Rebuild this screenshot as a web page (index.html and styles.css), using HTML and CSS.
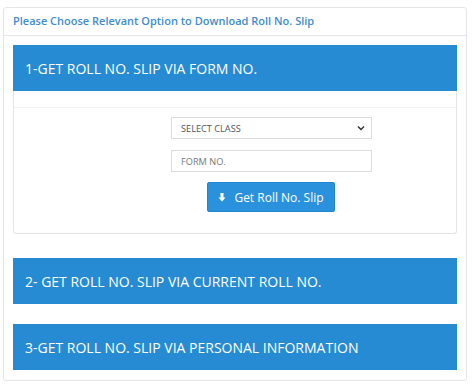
FILE: index.html
```html
<!DOCTYPE html>
<html>
<head>
<meta charset="utf-8">
<link rel="stylesheet" href="styles.css">
</head>
<body>
<div class="outer">
  <div class="outer-head">Please Choose Relevant Option to Download Roll No. Slip</div>
  <div class="outer-body">
    <div class="panel">
      <div class="panel-head">1-GET ROLL NO. SLIP VIA FORM NO.</div>
      <div class="panel-body">
        <div class="form">
          <div class="select">
            <span>SELECT CLASS</span>
            <svg class="caret" width="8" height="6" viewBox="0 0 8 6"><path d="M1 1.5 L4 4.5 L7 1.5" fill="none" stroke="#333" stroke-width="1.5"/></svg>
          </div>
          <div class="input">FORM NO.</div>
          <button class="btn">
            <svg class="arrow" width="8" height="9" viewBox="0 0 8 9"><path d="M2.5 0 H5.5 V4.5 H7.5 L4 8.5 L0.5 4.5 H2.5 Z" fill="#fff"/></svg>
            <span>Get Roll No. Slip</span>
          </button>
        </div>
      </div>
    </div>
    <div class="panel-head solo">2- GET ROLL NO. SLIP VIA CURRENT ROLL NO.</div>
    <div class="panel-head solo">3-GET ROLL NO. SLIP VIA PERSONAL INFORMATION</div>
  </div>
</div>
</body>
</html>
```
FILE: styles.css
```css
* { box-sizing: border-box; }
body {
  margin: 0;
  background: #fff;
  font-family: "Open Sans", "Noto Sans", sans-serif;
}
.outer {
  margin: 7px 7px 0 3px;
  width: 464px;
  height: 374px;
  border: 1px solid #e3e6ea;
  border-radius: 3px;
}
.outer-head {
  height: 28px;
  padding: 5px 9px 0;
  font-size: 11px;
  font-weight: 600;
  color: #3f8ccf;
  border-bottom: 1px solid #e3e6ea;
}
.outer-body {
  padding: 9px 9px 0 9px;
  display: flex;
  flex-direction: column;
}
.panel {
  border: 1px solid #e1e4e8;
  border-top: none;
  border-radius: 0 0 3px 3px;
}
.panel-head {
  height: 46px;
  background: #268bd2;
  color: #fff;
  font-size: 14px;
  padding: 0 12px;
  display: flex;
  align-items: center;
}
.panel > .panel-head { margin: 0 -1px; }
.solo { margin-top: 24px; }
.solo + .solo { margin-top: 20px; }
.panel-body {
  height: 142px;
  border-top: 1px solid #fff;
}
.form {
  margin-top: 15px;
  border-top: 1px solid #f2f2f2;
  padding-top: 9px;
  padding-left: 157px;
  display: flex;
  flex-direction: column;
  align-items: flex-start;
}
.select, .input {
  width: 201px;
  height: 22px;
  border: 1px solid #dcdcdc;
  font-size: 9.2px;
  color: #555;
  display: flex;
  align-items: center;
  padding: 0 9px;
}
.select { justify-content: space-between; padding-right: 6px; }
.input { margin-top: 11px; color: #777; }
.btn {
  margin-top: 10px;
  margin-left: 36px;
  width: 128px;
  height: 30px;
  background: #2a92dc;
  border: 1px solid #1f86d0;
  border-radius: 2px;
  color: #fff;
  font-family: "Open Sans", sans-serif;
  font-size: 12px;
  display: flex;
  align-items: center;
  justify-content: center;
  gap: 8px;
  padding: 0;
}
```
